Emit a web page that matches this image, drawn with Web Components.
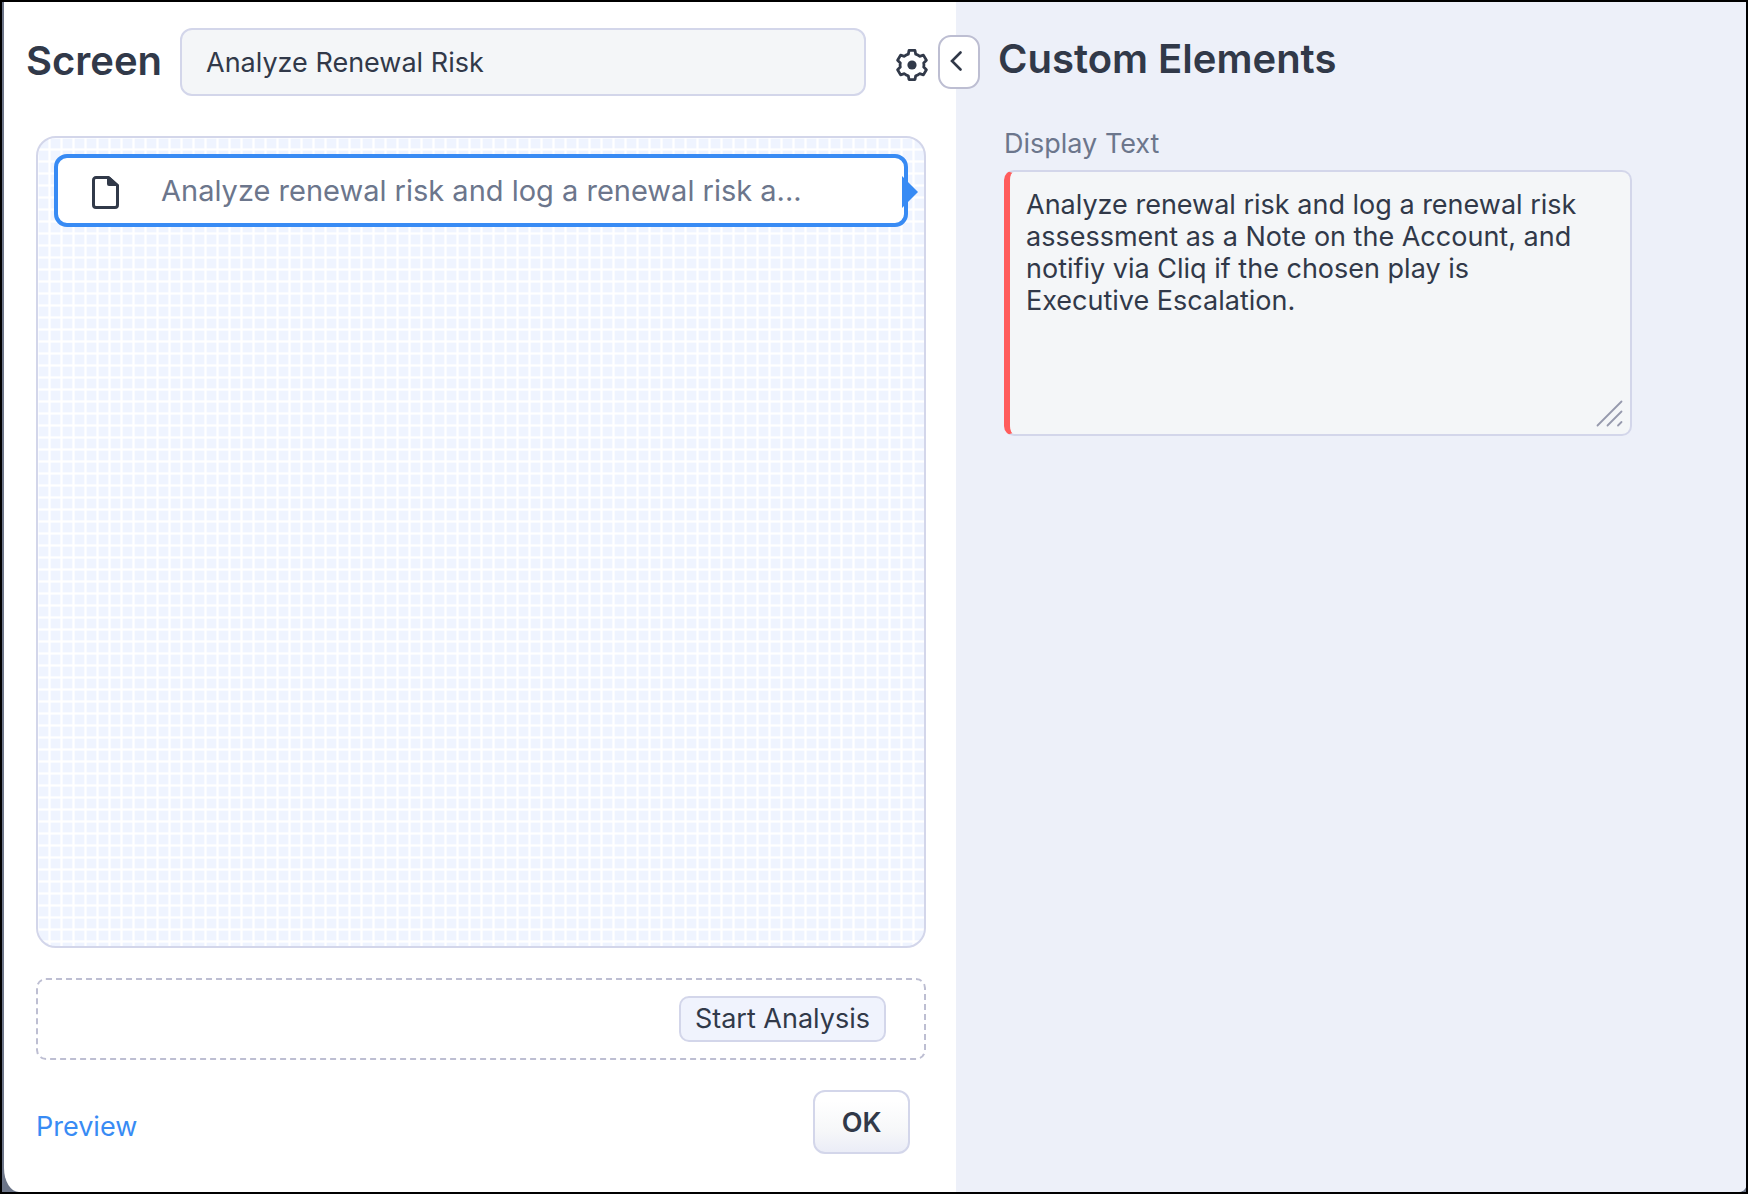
<!DOCTYPE html>
<html lang="en">
<head>
<meta charset="utf-8">
<title>Screen editor</title>
<style>
  html, body { margin: 0; height: 100%; }
  body {
    --ink: #313949;
    --muted: #6c768c;
    --line: #d3d6ea;
    --field: #f4f6f8;
    --blue: #388bf4;
    --panel: #edf0f9;
    font: 27px/36px Inter, "Open Sans", sans-serif;
    color: var(--ink);
  }
</style>
</head>
<body>
<screen-dialog>
  <screen-editor slot="editor">
    <screen-header slot="header" value="Analyze Renewal Risk">Screen</screen-header>
    <design-canvas slot="canvas">
      <canvas-node>Analyze renewal risk and log a renewal risk a...</canvas-node>
    </design-canvas>
    <action-strip slot="actions">Start Analysis</action-strip>
    <editor-footer slot="footer"></editor-footer>
  </screen-editor>
  <properties-panel slot="properties" heading="Custom Elements">
    <text-field label="Display Text">Analyze renewal risk and log a renewal risk assessment as a Note on the Account, and notifiy via Cliq if the chosen play is Executive Escalation.</text-field>
  </properties-panel>
</screen-dialog>

<script>
const define = (name, html, setup) => {
  const template = document.createElement('template');
  template.innerHTML = '<style>*{box-sizing:border-box}</style>' + html;
  customElements.define(name, class extends HTMLElement {
    constructor() {
      super();
      this.attachShadow({ mode: 'open' }).append(template.content.cloneNode(true));
    }
    connectedCallback() {
      if (setup) setup(this, this.shadowRoot);
    }
  });
};

define('screen-dialog', `
  <style>
    :host { box-sizing: border-box; min-height: 100vh; border: 2px solid #000; padding-left: 2px; background: #6c7588; display: flex; }
    main { flex: 1; display: grid; grid-template-columns: minmax(0, 952fr) minmax(0, 790fr); background: #fff; border-radius: 0 0 8px 15px / 0 0 6px 24px; overflow: hidden; }
  </style>
  <main><slot name="editor"></slot><slot name="properties"></slot></main>`);

define('screen-editor', `
  <style>
    :host { display: flex; flex-direction: column; box-sizing: border-box; padding: 26px 30px 38px 32px; }
    ::slotted([slot=canvas]) { flex: 1; margin: 40px 0 30px; }
    ::slotted([slot=actions]) { margin-bottom: 30px; }
  </style>
  <slot name="header"></slot><slot name="canvas"></slot><slot name="actions"></slot><slot name="footer"></slot>`);

define('screen-header', `
  <style>
    :host { display: flex; align-items: center; margin-left: -10px; }
    label { font-size: 40px; line-height: 48px; font-weight: 600; width: 154px; padding-bottom: 2px; }
    input { flex: 1; min-width: 0; height: 68px; padding: 0 24px; border: 2px solid var(--line); border-radius: 12px; background: var(--field); font: inherit; color: inherit; }
    button { display: flex; margin: 6px -4px 0 28px; padding: 0; border: 0; background: none; color: inherit; }
  </style>
  <label for="name"><slot></slot></label>
  <input id="name" type="text">
  <button type="button" aria-label="Settings">
    <svg width="36" height="36" viewBox="0 0 36 36" fill="none" stroke="currentColor" stroke-width="2.8" stroke-linejoin="round">
      <path d="M15 3.400h6l.7 3.800q2.200.6 3.900 2.100l3.800-1.200 3 5.200-2.700 2.700q.5 2 0 4l2.700 2.700-3 5.200-3.800-1.200q-1.700 1.500-3.900 2.100l-.7 3.800h-6l-.7-3.800q-2.200-.6-3.900-2.100l-3.800 1.200-3-5.200 2.700-2.700q-.5-2 0-4l-2.700-2.700 3-5.200 3.800 1.200q1.700-1.500 3.900-2.100z"/>
      <circle cx="18" cy="18" r="4.600" fill="currentColor" stroke="none"/>
    </svg>
  </button>`,
  (host, root) => { root.querySelector('input').value = host.getAttribute('value'); });

define('design-canvas', `
  <style>
    :host {
      display: block; box-sizing: border-box; padding: 16px; border: 2px solid var(--line); border-radius: 20px;
      --soft: rgba(255, 255, 255, .6);
      --rule: var(--soft) 1px, #fff 1px, #fff 2px, var(--soft) 2px, var(--soft) 3px, transparent 3px;
      background-color: #eff4ff;
      background-image: linear-gradient(var(--rule)), linear-gradient(90deg, var(--rule));
      background-size: 12px 12px; background-position: 10px 10px;
    }
  </style>
  <slot></slot>`);

define('canvas-node', `
  <style>
    :host { position: relative; display: flex; align-items: center; box-sizing: border-box; height: 73px; padding: 0 32px 0 34px; border: 4px solid var(--blue); border-radius: 13px; background: #fff; color: var(--muted); font-size: 29px; }
    .page { flex: none; margin: 4px 42px 0 0; color: var(--ink); }
    span { white-space: nowrap; }
    .pointer { position: absolute; right: -14px; top: 18px; color: var(--blue); }
  </style>
  <svg class="page" width="27" height="33" viewBox="0 0 27 33">
    <path d="M4 1.500h12.500L25.500 9.500V29a2.500 2.500 0 0 1-2.500 2.500H4A2.500 2.500 0 0 1 1.500 29V4A2.500 2.500 0 0 1 4 1.500z" fill="none" stroke="currentColor" stroke-width="3"/>
    <path d="M15 1h3l8 7.500V10H17a2 2 0 0 1-2-2z" fill="currentColor"/>
  </svg>
  <span><slot></slot></span>
  <svg class="pointer" width="16" height="32" viewBox="0 0 16 32"><path d="M0 0l16 16L0 32z" fill="currentColor"/></svg>`);

define('action-strip', `
  <style>
    :host { display: flex; justify-content: flex-end; align-items: center; box-sizing: border-box; height: 82px; padding-right: 38px; border: 2px dashed #bdbed2; border-radius: 10px; }
    button { height: 46px; padding: 0 14px; border: 2px solid var(--line); border-radius: 10px; background: #f0f3fd; font: inherit; color: inherit; }
  </style>
  <button type="button"><slot></slot></button>`);

define('editor-footer', `
  <style>
    :host { display: flex; justify-content: space-between; align-items: center; padding-right: 16px; }
    a { color: var(--blue); text-decoration: none; padding-top: 10px; }
    button { width: 97px; height: 64px; padding: 2px 0 0; border: 2px solid var(--line); border-radius: 12px; background: linear-gradient(#fff 15%, #f6f7f9 65%, #ebedf7); font: inherit; font-weight: 600; color: inherit; }
  </style>
  <a href="#preview">Preview</a><button type="button">OK</button>`);

define('properties-panel', `
  <style>
    :host { position: relative; display: block; box-sizing: border-box; padding: 33px 114px 32px 42px; background: var(--panel); }
    h2 { margin: 0 0 37px; font-size: 40px; line-height: 48px; font-weight: 600; }
    ::slotted(text-field) { margin-left: 6px; }
    button { position: absolute; left: -18px; top: 33px; width: 42px; height: 54px; display: flex; align-items: center; justify-content: center; padding: 0 6px 2px 0; border: 2px solid #bdbed2; border-radius: 13px; background: #fff; color: inherit; }
  </style>
  <button type="button" aria-label="Collapse panel">
    <svg width="12" height="20" viewBox="0 0 12 20" fill="none" stroke="currentColor" stroke-width="2.600" stroke-linecap="round"><path d="M10.500 1.500L2 10l8.500 8.500"/></svg>
  </button>
  <h2></h2>
  <slot></slot>`,
  (host, root) => { root.querySelector('h2').textContent = host.getAttribute('heading'); });

define('text-field', `
  <style>
    :host { display: block; }
    label { display: block; margin-bottom: 2px; color: var(--muted); line-height: 48px; }
    .box { position: relative; display: flex; }
    textarea { flex: 1; min-width: 0; height: 266px; margin: 0; padding: 17px 40px 16px 16px; border: 2px solid var(--line); border-left: 6px solid #ff5c5c; border-radius: 10px; background: var(--field); resize: none; outline: 0; font: inherit; line-height: 32px; color: inherit; }
    svg { position: absolute; right: 9px; bottom: 9px; color: #9699ad; }
  </style>
  <label for="text"></label>
  <div class="box">
    <textarea id="text"></textarea>
    <svg width="27" height="27" viewBox="0 0 27 27" fill="none" stroke="currentColor" stroke-width="1.800" stroke-linecap="round"><path d="M1.500 25.500l24-24M11.500 25.500l14-14M22 25.500l3.500-3.500"/></svg>
  </div>`,
  (host, root) => {
    root.querySelector('label').textContent = host.getAttribute('label');
    root.querySelector('textarea').value = host.textContent.trim();
  });
</script>
</body>
</html>
